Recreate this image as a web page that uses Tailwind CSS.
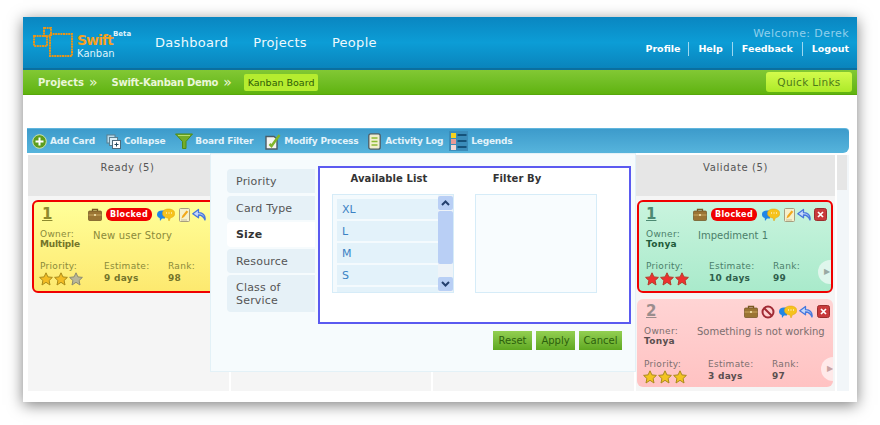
<!DOCTYPE html>
<html lang="en">
<head>
<meta charset="UTF-8" />
<title>Swift Kanban</title>
<script src="https://cdn.jsdelivr.net/npm/@tailwindcss/browser@4"></script>
</head>
<body class="w-[880px] h-[425px] overflow-hidden bg-white pt-[17px] pl-[23px] font-['DejaVu_Sans',sans-serif]">
<svg class="hidden" xmlns="http://www.w3.org/2000/svg">
  <symbol id="star" viewBox="0 0 14 14"><path d="M7 .8l1.900 4.100 4.500.5-3.300 3.100.9 4.500L7 10.300l-4 2.700.9-4.500L.6 5.400l4.500-.5z" stroke-width="1" stroke-linejoin="round"/></symbol>
  <symbol id="case" viewBox="0 0 14 13"><path d="M4.500 3V1.500h5V3" fill="none" stroke="#7a5a22" stroke-width="1.300"/><rect x=".5" y="3" width="13" height="9.500" rx="1" fill="#9a7433" stroke="#6d5020" stroke-width=".7"/><path d="M.5 7h13" stroke="#c9a55f"/><rect x="6" y="6" width="2" height="2" fill="#e8d49a"/></symbol>
  <symbol id="bubbles" viewBox="0 0 18 14"><path d="M0 6.500C0 3.800 2 2.500 5 2.500h3v8H5L3 13l-.3-3C1 9.500 0 8.200 0 6.500z" fill="#1f86e6"/><path d="M5.500 5.500C5.500 2.500 8 1 11.500 1S17.800 2.500 17.800 5.500c0 2.400-2 4-4.300 4.300L12 13l-1-3.100C7.700 9.800 5.500 8 5.500 5.500z" fill="#f6c21c" stroke="#e3a40c" stroke-width=".5"/><path d="M9 5h1M11.500 5h1M14 5h1" stroke="#fff" stroke-width="1.200"/></symbol>
  <symbol id="note" viewBox="0 0 11 14"><rect x=".5" y=".5" width="10" height="13" rx="1" fill="#f6f0cc" stroke="#a79f80"/><path d="M2.500 10.500l.8-2.800 4.200-5.200 1.800 1.300-4.200 5.300z" fill="#f2a81d"/><path d="M2 12h6" stroke="#c6bd97"/></symbol>
  <symbol id="back" viewBox="0 0 14 13"><path d="M13 12C13.800 7.500 10.500 4.300 6.500 4.600V1.500L.8 5.800l5.700 4V7C9.200 6.800 11.500 8.500 13 12z" fill="#c6d9fb" stroke="#4878dc" stroke-width="1.300" stroke-linejoin="round"/></symbol>
  <symbol id="close" viewBox="0 0 13 13"><rect x=".5" y=".5" width="12" height="12" rx="2" fill="#c9393b" stroke="#9c2d2d"/><path d="M4 4l5 5M9 4l-5 5" stroke="#fff" stroke-width="1.700"/></symbol>
  <symbol id="ban" viewBox="0 0 14 14"><circle cx="7" cy="7" r="5.500" fill="none" stroke="#a12b35" stroke-width="2"/><path d="M3.200 3.200l7.600 7.600" stroke="#a12b35" stroke-width="2"/></symbol>
</svg>

<div class="relative w-[834px] h-[385px] bg-white shadow-[0_3px_14px_rgba(0,0,0,0.5)]">
  <header class="flex h-[53px] bg-gradient-to-b from-[#0a86c1] via-[#0c9dd6] to-[#0a84bc] border-b-2 border-[#0a6f9f]">
    <div class="flex items-start w-[132px] pl-[9px] pt-[9px]">
      <svg class="w-[42px] h-[32px] shrink-0" viewBox="0 0 42 32" fill="none" stroke="#e8951a" stroke-width="2" stroke-dasharray="2 .6">
        <rect x="18" y="8" width="22" height="22" />
        <rect x="2" y="10" width="13" height="10" />
        <rect x="12" y="2" width="7" height="8" />
      </svg>
      <div class="relative ml-[3px] pt-[7px]">
        <div class="text-[14px] leading-[15px] font-bold text-[#f6a11f] tracking-[-1px]">Swift</div>
        <div class="text-[10px] leading-[12px] text-[#dff3fb]">Kanban</div>
        <span class="absolute left-[36px] top-[3px] text-[7px] leading-[10px] font-bold text-[#dff3fb]">Beta</span>
      </div>
    </div>
    <nav class="flex gap-[25px] pt-[17px] text-[13px] leading-[18px] tracking-[0.3px] text-[#eef9fd]">
      <a>Dashboard</a><a>Projects</a><a>People</a>
    </nav>
    <div class="ml-auto pr-[8px] pt-[9px] text-right">
      <div class="text-[11px] leading-[15px] tracking-[0.4px] text-[#8fd0ec]">Welcome: Derek</div>
      <div class="flex justify-end mt-[1px] text-[9.500px] leading-[14px] font-bold text-white">
        <a class="pr-[8px] border-r border-[#9ed8f0]">Profile</a>
        <a class="px-[9px] border-r border-[#9ed8f0]">Help</a>
        <a class="px-[9px] border-r border-[#9ed8f0]">Feedback</a>
        <a class="pl-[9px]">Logout</a>
      </div>
    </div>
  </header>

  <div class="flex items-center h-[25px] bg-gradient-to-b from-[#82c834] to-[#5fb30d] border-b border-[#57a70b] pl-[15px] text-[10px] font-bold text-[#eaf7d8]">
    <span>Projects</span><span class="ml-[5px] text-[14px] leading-[14px] font-normal">&raquo;</span>
    <span class="ml-[14px] tracking-[-0.3px]">Swift-Kanban Demo</span><span class="ml-[5px] text-[14px] leading-[14px] font-normal">&raquo;</span>
    <span class="ml-[12px] px-[4px] h-[17px] leading-[17px] rounded-[2px] bg-[#b5ec2f] text-[9.500px] font-normal text-[#2e5c06]">Kanban Board</span>
    <span class="ml-auto mr-[5px] w-[86px] h-[20px] leading-[20px] text-center rounded-[3px] bg-gradient-to-b from-[#d3fb4b] to-[#acea27] text-[10.500px] tracking-[0.3px] font-normal text-[#4c7a1a]">Quick Links</span>
  </div>

  <div class="h-[33px]"></div>

  <div class="flex items-center ml-[4px] w-[822px] h-[25px] rounded-tr-[4px] rounded-br-[6px] border-t border-[#5fb5dd] bg-gradient-to-b from-[#3d9bcb] to-[#56b4dc] text-[9px] tracking-[-0.2px] font-bold text-[#e2f3fa]">
    <svg class="ml-[5px] w-[15px] h-[15px]" viewBox="0 0 15 15"><circle cx="7.500" cy="7.500" r="6.800" fill="#5c9d1d" stroke="#cfe3a8"/><path d="M7.500 3.500v8M3.500 7.500h8" stroke="#fff" stroke-width="2"/></svg>
    <span class="ml-[3px] pt-[2px]">Add Card</span>
    <svg class="ml-[11px] w-[15px] h-[15px]" viewBox="0 0 15 15"><rect x="1" y="1" width="8" height="8" fill="#b9dcec" stroke="#5d7f90"/><rect x="3.500" y="3.500" width="8" height="8" fill="#d8edf6" stroke="#5d7f90"/><rect x="6.500" y="6.500" width="8" height="8" fill="#fff" stroke="#4f6b7a"/><path d="M10.500 8.500v4M8.500 10.500h4" stroke="#24485a"/></svg>
    <span class="ml-[3px] pt-[2px]">Collapse</span>
    <svg class="ml-[10px] w-[18px] h-[16px]" viewBox="0 0 18 16"><path d="M.5 1h17L11 8.500V15.500H7.500V8.500z" fill="#74ad2a" stroke="#4e8a18"/><path d="M3 2.500h12" stroke="#b7dc6f"/></svg>
    <span class="ml-[2px] pt-[2px]">Board Filter</span>
    <svg class="ml-[11px] w-[17px] h-[17px]" viewBox="0 0 17 17"><path d="M2 3.500h8l3 2.500v10H2z" fill="#f4f4f0" stroke="#4c5c66" stroke-width="1.400"/><path d="M5.500 11l2 2 8-11" fill="none" stroke="#7fb52c" stroke-width="2.500"/></svg>
    <span class="ml-[3px] pt-[2px]">Modify Process</span>
    <svg class="ml-[10px] w-[13px] h-[17px]" viewBox="0 0 13 17"><rect x=".8" y=".8" width="11.400" height="15.400" rx="2" fill="#f1eecf" stroke="#4c5c66" stroke-width="1.300"/><path d="M3.500 5h6M3.500 8.500h6M3.500 12h6" stroke="#8dbb34" stroke-width="1.600"/></svg>
    <span class="ml-[4px] pt-[2px]">Activity Log</span>
    <svg class="ml-[6px] w-[19px] h-[20px]" viewBox="0 0 19 20"><rect width="19" height="20" fill="#3b8dba"/><rect x="2" y="2" width="5" height="5" fill="#f7d21f"/><rect x="2" y="8" width="5" height="5" fill="#e89a96"/><rect x="2" y="14" width="5" height="5" fill="#f3d8d4"/><path d="M8.500 4h9M8.500 10h9M8.500 16h9" stroke="#15537a" stroke-width="2"/></svg>
    <span class="ml-[3px] pt-[2px]">Legends</span>
  </div>

  <!-- columns -->
  <div class="flex gap-[2px] ml-[5px] mt-[2px] w-[821px] h-[236px]">
    <section class="w-[201px] bg-[#f5f5f5]">
      <h3 class="h-[41px] pt-[6px] pr-[2px] bg-[#e6e6e6] text-center text-[10px] leading-[14px] tracking-[0.6px] font-normal text-[#555]">Ready (5)</h3>
      <article class="mt-[4px] ml-[4px] w-[196px] h-[93px] rounded-[6px] border-2 border-[#f00000] bg-gradient-to-b from-[#ffff99] to-[#fde96f] overflow-hidden">
        <div class="flex items-center h-[22px] pt-[3px] pl-[8px]">
          <span class="w-[46px] text-[15px] font-bold underline text-[#8d8a2e]">1</span>
          <svg class="w-[14px] h-[13px]"><use href="#case"/></svg>
          <span class="ml-[4px] w-[46px] h-[13px] rounded-[6px] bg-[#f00000] text-center text-[8px] leading-[13px] tracking-[0.4px] font-bold text-white">Blocked</span>
          <svg class="ml-[5px] w-[18px] h-[14px]"><use href="#bubbles"/></svg>
          <svg class="ml-[4px] w-[11px] h-[14px]"><use href="#note"/></svg>
          <svg class="ml-[2px] w-[14px] h-[13px]"><use href="#back"/></svg>
        </div>
        <div class="flex mt-[5px] pl-[6px] text-[#8a8a3a]">
          <div class="w-[53px] text-[9px] tracking-[0.3px] leading-[10px]">Owner:<br><b class="tracking-[-0.2px] text-[#74742a]">Multiple</b></div>
          <div class="pt-[1px] text-[10px] leading-[11px] tracking-[0.2px]">New user Story</div>
        </div>
        <div class="flex mt-[11px] pl-[6px] text-[9px] tracking-[0.3px] leading-[12px] text-[#8a8a3a]">
          <div class="w-[64px]">Priority:
            <div class="flex gap-[1px] -ml-[1px]"><svg class="w-[14px] h-[14px] fill-[#f3bc24] stroke-[#a98a1a]"><use href="#star"/></svg><svg class="w-[14px] h-[14px] fill-[#f3bc24] stroke-[#a98a1a]"><use href="#star"/></svg><svg class="w-[14px] h-[14px] fill-[#b9b79a] stroke-[#8a8a70]"><use href="#star"/></svg></div>
          </div>
          <div class="w-[64px]">Estimate:<br><b class="text-[#74742a]">9 days</b></div>
          <div>Rank:<br><b class="text-[#74742a]">98</b></div>
        </div>
      </article>
    </section>
    <section class="w-[200px] bg-[#f5f5f5]"><div class="h-[41px] bg-[#e6e6e6]"></div></section>
    <section class="w-[201px] bg-[#f5f5f5]"><div class="h-[41px] bg-[#e6e6e6]"></div></section>

    <section class="w-[199px] bg-[#f5f5f5]">
      <h3 class="h-[41px] pt-[6px] bg-[#e6e6e6] text-center text-[10px] leading-[14px] tracking-[0.6px] font-normal text-[#555]">Validate (5)</h3>
      <article class="relative mt-[4px] ml-[1px] w-[196px] h-[93px] rounded-[6px] border-2 border-[#f00000] bg-gradient-to-b from-[#c9f4de] to-[#a9eacb] overflow-hidden">
        <div class="flex items-center h-[22px] pt-[3px] pl-[7px]">
          <span class="w-[47px] text-[15px] font-bold underline text-[#4c8a72]">1</span>
          <svg class="w-[14px] h-[13px]"><use href="#case"/></svg>
          <span class="ml-[4px] w-[46px] h-[13px] rounded-[6px] bg-[#f00000] text-center text-[8px] leading-[13px] tracking-[0.4px] font-bold text-white">Blocked</span>
          <svg class="ml-[5px] w-[18px] h-[14px]"><use href="#bubbles"/></svg>
          <svg class="ml-[4px] w-[11px] h-[14px]"><use href="#note"/></svg>
          <svg class="ml-[2px] w-[14px] h-[13px]"><use href="#back"/></svg>
          <svg class="ml-[3px] w-[13px] h-[13px]"><use href="#close"/></svg>
        </div>
        <div class="flex mt-[5px] pl-[7px] text-[#4b7f6a]">
          <div class="w-[52px] text-[9px] tracking-[0.3px] leading-[10px]">Owner:<br><b class="text-[#1f5a3a]">Tonya</b></div>
          <div class="pt-[1px] text-[10px] leading-[11px]">Impediment 1</div>
        </div>
        <div class="flex mt-[11px] pl-[7px] text-[9px] tracking-[0.3px] leading-[12px] text-[#4b7f6a]">
          <div class="w-[63px]">Priority:
            <div class="flex gap-[1px] -ml-[1px]"><svg class="w-[14px] h-[14px] fill-[#ee3030] stroke-[#b53a2a]"><use href="#star"/></svg><svg class="w-[14px] h-[14px] fill-[#ee3030] stroke-[#b53a2a]"><use href="#star"/></svg><svg class="w-[14px] h-[14px] fill-[#ee3030] stroke-[#b53a2a]"><use href="#star"/></svg></div>
          </div>
          <div class="w-[64px]">Estimate:<br><b class="text-[#2f5f4c]">10 days</b></div>
          <div>Rank:<br><b class="text-[#2f5f4c]">99</b></div>
        </div>
        <span class="absolute -right-[11px] top-[58px] flex items-center pl-[6px] w-[24px] h-[24px] rounded-full bg-[#dff6ec] text-[8px] text-[#9aa9a2]">&#9654;</span>
      </article>
      <article class="relative mt-[6px] ml-[1px] w-[196px] h-[88px] rounded-[6px] bg-gradient-to-b from-[#ffd4d4] to-[#ffc2c2] overflow-hidden">
        <div class="flex items-center h-[22px] pt-[3px] pl-[9px]">
          <span class="w-[98px] text-[15px] font-bold underline text-[#9b8d8d]">2</span>
          <svg class="w-[14px] h-[13px]"><use href="#case"/></svg>
          <svg class="ml-[3px] w-[14px] h-[14px]"><use href="#ban"/></svg>
          <svg class="ml-[4px] w-[18px] h-[14px]"><use href="#bubbles"/></svg>
          <svg class="ml-[2px] w-[14px] h-[13px]"><use href="#back"/></svg>
          <svg class="ml-[4px] w-[13px] h-[13px]"><use href="#close"/></svg>
        </div>
        <div class="flex mt-[5px] pl-[7px] text-[#7c6f6f]">
          <div class="w-[53px] text-[9px] tracking-[0.3px] leading-[10px]">Owner:<br><b class="text-[#5a4f4f]">Tonya</b></div>
          <div class="text-[10px] leading-[11px]">Something is not working</div>
        </div>
        <div class="flex mt-[12px] pl-[7px] text-[9px] tracking-[0.3px] leading-[12px] text-[#7c6f6f]">
          <div class="w-[64px]">Priority:
            <div class="flex gap-[1px] -ml-[1px]"><svg class="w-[14px] h-[14px] fill-[#f3c420] stroke-[#a98a1a]"><use href="#star"/></svg><svg class="w-[14px] h-[14px] fill-[#f3c420] stroke-[#a98a1a]"><use href="#star"/></svg><svg class="w-[14px] h-[14px] fill-[#f3c420] stroke-[#a98a1a]"><use href="#star"/></svg></div>
          </div>
          <div class="w-[64px]">Estimate:<br><b class="text-[#5a4f4f]">3 days</b></div>
          <div>Rank:<br><b class="text-[#5a4f4f]">97</b></div>
        </div>
        <span class="absolute -right-[12px] top-[58px] flex items-center pl-[6px] w-[24px] h-[24px] rounded-full bg-[#ffe9e9] text-[8px] text-[#c9a3a3]">&#9654;</span>
      </article>
    </section>
    <div class="w-[12px] bg-[#f2f6f9]"><div class="w-[10px] h-[35px] bg-[#e6e6e6]"></div></div>
  </div>

  <!-- board filter popup -->
  <div class="absolute left-[187px] top-[136px] flex w-[426px] h-[219px] border border-[#e3f1f7] bg-[#f6fbfd] pt-[12px] pl-[16px]">
    <ul class="w-[88px] mt-[3px] text-[11px] leading-[13px] tracking-[0.2px] text-[#555]">
      <li class="h-[24px] pl-[9px] pt-[6px] rounded-l-[4px] bg-[#e6f1f7]">Priority</li>
      <li class="mt-[3px] h-[24px] pl-[9px] pt-[6px] rounded-l-[4px] bg-[#e6f1f7]">Card Type</li>
      <li class="mt-[2px] h-[25px] pl-[9px] pt-[6px] rounded-l-[4px] bg-white font-bold text-[#333]">Size</li>
      <li class="mt-[2px] h-[24px] pl-[9px] pt-[6px] rounded-l-[4px] bg-[#e6f1f7]">Resource</li>
      <li class="mt-[2px] h-[37px] pl-[9px] pt-[6px] rounded-l-[4px] bg-[#e6f1f7]">Class of<br>Service</li>
    </ul>
    <div class="ml-[3px]">
      <div class="w-[313px] h-[158px] border-2 border-[#5a5af0] bg-white pt-[4px] pl-[12px]">
        <div class="flex text-[10px] leading-[14px] tracking-[0.1px] font-bold text-[#333]">
          <span class="w-[122px] pr-[8px] text-center">Available List</span>
          <span class="w-[122px] ml-[21px] pr-[38px] text-center">Filter By</span>
        </div>
        <div class="flex mt-[8px]">
          <div class="relative w-[122px] h-[99px] border border-[#d6ecf8] bg-[#f4fafd] overflow-hidden pl-[4px] pt-[4px] text-[11px] text-[#3b82c4]">
            <div class="w-[101px] h-[20px] mb-[2px] pl-[5px] leading-[22px] bg-[#e3f2fa]">XL</div>
            <div class="w-[101px] h-[20px] mb-[2px] pl-[5px] leading-[22px] bg-[#e3f2fa]">L</div>
            <div class="w-[101px] h-[20px] mb-[2px] pl-[5px] leading-[22px] bg-[#e3f2fa]">M</div>
            <div class="w-[101px] h-[20px] mb-[2px] pl-[5px] leading-[22px] bg-[#e3f2fa]">S</div>
            <div class="w-[101px] h-[20px] bg-[#e3f2fa]"></div>
            <div class="absolute right-0 top-0 flex flex-col w-[15px] h-full bg-[#eef3f8]">
              <span class="flex items-center justify-center mt-[1px] h-[14px] rounded-[2px] bg-[#b9cff5]"><svg class="w-[9px] h-[6px]" viewBox="0 0 9 6" fill="none" stroke="#24406e" stroke-width="2"><path d="M1 5l3.500-3.500L8 5"/></svg></span>
              <span class="mt-[1px] h-[53px] rounded-[2px] bg-[#b9cff5]"></span>
              <span class="flex-1"></span>
              <span class="flex items-center justify-center mb-[1px] h-[14px] rounded-[2px] bg-[#b9cff5]"><svg class="w-[9px] h-[6px]" viewBox="0 0 9 6" fill="none" stroke="#24406e" stroke-width="2"><path d="M1 1l3.500 3.500L8 1"/></svg></span>
            </div>
          </div>
          <div class="ml-[21px] w-[122px] h-[99px] border border-[#d6ecf8] bg-[#f8fcfe]"></div>
        </div>
      </div>
      <div class="flex justify-end gap-[4px] mt-[7px] mr-[9px] text-[10px] leading-[19px] text-[#2c5f0c]">
        <button class="w-[39px] h-[19px] bg-gradient-to-b from-[#93cf51] to-[#5fa820]">Reset</button>
        <button class="w-[39px] h-[19px] bg-gradient-to-b from-[#93cf51] to-[#5fa820]">Apply</button>
        <button class="w-[43px] h-[19px] bg-gradient-to-b from-[#93cf51] to-[#5fa820]">Cancel</button>
      </div>
    </div>
  </div>
</div>
</body>
</html>
